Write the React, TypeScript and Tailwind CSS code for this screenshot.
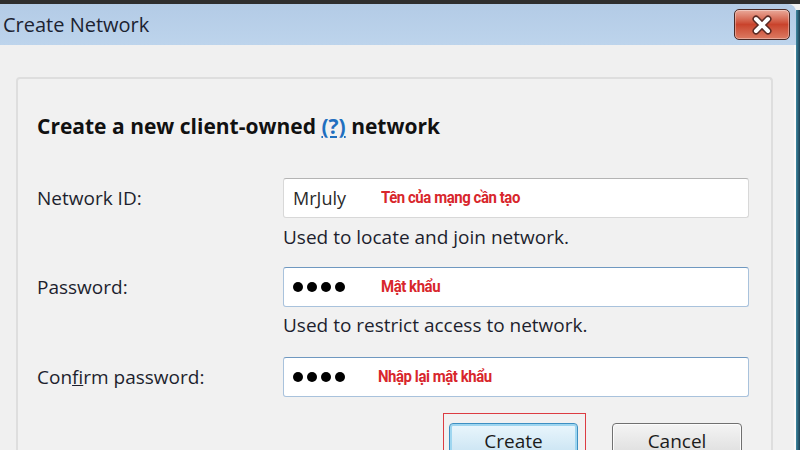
import React from 'react';

const font = { fontFamily: '"Open Sans", "Noto Sans", sans-serif' };

const CloseButton: React.FC = () => (
  <div className="mr-[6px] flex h-[31px] w-[56px] items-center justify-center rounded-[5px] border border-[#4a2a26] bg-gradient-to-b from-[#e9a99a] via-[#c9432c] to-[#dc7a62] shadow-[inset_0_0_0_1px_rgba(255,255,255,0.35)]">
    <svg width="26" height="20" viewBox="0 0 26 20">
      <path d="M7 4 L19 16 M19 4 L7 16" stroke="#5a2a24" strokeWidth="7" strokeLinecap="round" />
      <path d="M7 4 L19 16 M19 4 L7 16" stroke="#ffffff" strokeWidth="4" strokeLinecap="round" />
    </svg>
  </div>
);

const Dots: React.FC = () => (
  <div className="flex w-[88px] shrink-0 items-center gap-[4px]">
    <span className="h-[10px] w-[10px] rounded-full bg-black" />
    <span className="h-[10px] w-[10px] rounded-full bg-black" />
    <span className="h-[10px] w-[10px] rounded-full bg-black" />
    <span className="h-[10px] w-[10px] rounded-full bg-black" />
  </div>
);

const Note: React.FC<{ children: React.ReactNode }> = ({ children }) => (
  <span
    className="inline-block origin-left scale-x-[0.88] whitespace-nowrap text-[17px] font-bold tracking-[-0.5px] text-[#d8262c]"
    style={{ fontFamily: '"Roboto", "Open Sans", sans-serif' }}
  >
    {children}
  </span>
);

const Field: React.FC<{ label: React.ReactNode; focused?: boolean; children: React.ReactNode }> = ({ label, focused, children }) => (
  <div className="flex items-center">
    <div className="w-[246px] text-[19px] text-[#1d1f2e]">{label}</div>
    <div
      className={
        focused
          ? 'flex h-[40px] w-[466px] items-center rounded-[3px] border border-[#a9c2dc] border-t-[#6f98c0] bg-white pl-[9px]'
          : 'flex h-[40px] w-[466px] items-center rounded-[3px] border border-[#d8d8d8] border-t-[#b4b4b4] bg-white pl-[9px]'
      }
    >
      {children}
    </div>
  </div>
);

const Help: React.FC<{ children: React.ReactNode }> = ({ children }) => (
  <div className="ml-[246px] h-[24px] text-[19px] leading-[24px] text-[#1d1f2e]">{children}</div>
);

export default function App() {
  return (
    <div className="flex h-[450px] w-[800px] flex-col overflow-hidden bg-[#f0f0f0]" style={font}>
      <div className="h-[4px] shrink-0 bg-[#2e2e2e]" />
      <div className="flex min-h-0 flex-1">
        <div className="flex flex-1 flex-col">
          <div className="flex h-[41px] shrink-0 items-center justify-between rounded-tr-[8px] bg-gradient-to-b from-[#b3cbe6] to-[#bdd4ec]">
            <span className="ml-[3px] text-[20px] text-[#1c2331]">Create Network</span>
            <CloseButton />
          </div>
          <div className="flex-1 border-r-[2px] border-[#fafafa] pl-[16px] pr-[21px] pt-[32px]">
            <div className="h-full rounded-t-[4px] border-2 border-b-0 border-[#dedede] bg-[#f1f1f1] pl-[19px] pt-[33px]">
              <h1 className="h-[28px] whitespace-nowrap text-[21px] font-bold leading-[28px] text-[#111111]">
                Create a new client-owned{' '}
                <span className="text-[#1f6fbf] underline">(?)</span> network
              </h1>
              <div className="mt-[38px]">
                <Field label="Network ID:">
                  <span className="w-[88px] shrink-0 text-[18px] text-[#2a2a2a]">MrJuly</span>
                  <Note>Tên của mạng cần tạo</Note>
                </Field>
              </div>
              <div className="mt-[7px]">
                <Help>Used to locate and join network.</Help>
              </div>
              <div className="mt-[18px]">
                <Field label="Password:" focused>
                  <Dots />
                  <Note>Mật khẩu</Note>
                </Field>
              </div>
              <div className="mt-[6px]">
                <Help>Used to restrict access to network.</Help>
              </div>
              <div className="mt-[20px]">
                <Field
                  label={
                    <>
                      Con<span className="underline">f</span>irm password:
                    </>
                  }
                  focused
                >
                  <Dots />
                  <span className="-ml-[3px]">
                    <Note>Nhập lại mật khẩu</Note>
                  </span>
                </Field>
              </div>
              <div className="mt-[16px] flex items-start pl-[406px]">
                <div className="border border-[#dc3c42] pb-[6px] pl-[5px] pr-[7px] pt-[9px]">
                  <button className="h-[36px] w-[129px] rounded-[4px] border border-[#3d8fc2] bg-gradient-to-b from-[#eaf6fc] to-[#c6e2f2] text-[19px] text-[#1b1b1b] shadow-[inset_0_0_0_2px_#9ed6f0]">
                    Create
                  </button>
                </div>
                <button className="ml-[26px] mt-[10px] h-[36px] w-[130px] rounded-[4px] border border-[#707070] bg-gradient-to-b from-[#f4f4f4] to-[#dcdcdc] text-[19px] text-[#1b1b1b] shadow-[inset_0_0_0_1px_#fcfcfc]">
                  Cancel
                </button>
              </div>
            </div>
          </div>
        </div>
        <div className="mt-[6px] w-[4px] bg-gradient-to-r from-[#3e8aa4] to-[#1d3f52]" />
      </div>
    </div>
  );
}
